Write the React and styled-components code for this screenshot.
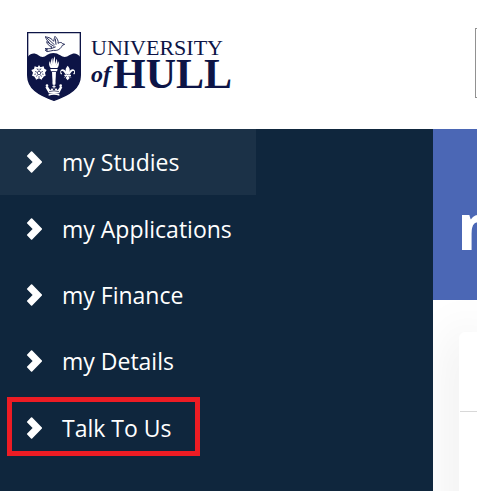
import styled, { createGlobalStyle } from 'styled-components';

const GlobalStyle = createGlobalStyle`
  * {
    box-sizing: border-box;
  }
  body {
    margin: 0;
    background: #ffffff;
    font-family: 'Open Sans', 'Noto Sans', sans-serif;
    overflow: hidden;
  }
`;

const Page = styled.div`
  display: flex;
  flex-direction: column;
  min-height: 100vh;
`;

const Header = styled.header`
  display: flex;
  align-items: flex-start;
  justify-content: space-between;
  height: 129px;
  padding: 28px 0 0 27px;
  overflow: hidden;
`;

const Logo = styled.a`
  display: flex;
  gap: 10px;
  padding-top: 4px;
  color: #0d1446;
  text-decoration: none;
  font-family: 'Liberation Serif', serif;
`;

const Wordmark = styled.span`
  display: flex;
  flex-direction: column;
  padding-top: 6px;
`;

const University = styled.span`
  font-size: 22px;
  line-height: 20px;
`;

const Hull = styled.span`
  display: flex;
  align-items: center;
  gap: 2px;
  font-size: 42px;
  font-weight: 700;
  line-height: 32px;
`;

const Of = styled.i`
  font-size: 24px;
`;

const Search = styled.input`
  flex: none;
  width: 240px;
  height: 70px;
  margin-right: -238px;
  border: 1px solid #919191;
  background: #ffffff;
`;

const Body = styled.div`
  display: flex;
  flex: 1;
`;

const Sidebar = styled.nav`
  flex: none;
  width: 433px;
  background: #0f263d;
`;

const Menu = styled.ul`
  display: grid;
  grid-template-rows: repeat(5, 1fr);
  width: 256px;
  height: 332px;
  margin: 0;
  padding: 0;
  list-style: none;
`;

const MenuItem = styled.li`
  position: relative;
  display: flex;
  background: ${(props) => (props.$active ? '#1b3147' : 'transparent')};
`;

const MenuLink = styled.a`
  display: flex;
  align-items: center;
  gap: 20px;
  width: 100%;
  padding-left: 26px;
  color: #ffffff;
  font-size: 23px;
  line-height: 32px;
  text-decoration: none;
`;

const Marker = styled.span`
  position: absolute;
  top: 2px;
  left: 7px;
  width: 193px;
  height: 59px;
  border: 5px solid #ed1c24;
  pointer-events: none;
`;

const Main = styled.main`
  display: flex;
  flex-direction: column;
  flex: 1;
  min-width: 0;
  overflow: hidden;
`;

const Banner = styled.div`
  display: flex;
  align-items: center;
  height: 171px;
  padding: 22px 0 0 24px;
  background: #4b67b5;
`;

const Title = styled.h1`
  margin: 0;
  color: #ffffff;
  font-size: 64px;
  font-weight: 700;
  line-height: 72px;
`;

const Content = styled.div`
  display: flex;
  flex: 1;
  padding: 32px 0 0 26px;
  overflow: hidden;
`;

const Card = styled.section`
  flex: 1;
  margin-bottom: -80px;
  border-radius: 6px 0 0 0;
  background: #ffffff;
  box-shadow: 0 0 50px rgba(0, 0, 0, 0.14);
`;

const CardHead = styled.div`
  height: 80px;
  margin-left: 1px;
  border-bottom: 1px solid #d8d8d8;
`;

const items = [
  { name: 'my Studies', active: true },
  { name: 'my Applications' },
  { name: 'my Finance' },
  { name: 'my Details' },
  { name: 'Talk To Us', marked: true },
];

const Chevron = () => (
  <svg width='16' height='22' viewBox='0 0 16 22' fill='#ffffff' aria-hidden='true'>
    <path d='M5 .6Q5.6 0 6.2 .6L15.9 10.4Q16.4 11 15.9 11.6L6.2 21.4Q5.6 22 5 21.4L1.2 17.6Q.6 17 1.2 16.4L6.6 11L1.2 5.6Q.6 5 1.2 4.4Z' />
  </svg>
);

const Crest = () => (
  <svg width='54' height='69' viewBox='36 36 162 207' aria-hidden='true'>
    <path
      d='M38 38H196V165C196 205 165 224 117 241C69 224 38 205 38 165Z'
      fill='#ffffff'
      stroke='#0d1446'
      strokeWidth='4'
    />
    <path
      d='M38 111C48 98 60 99 69 105C79 113 87 113 96 105C108 96 124 97 136 106C146 113 154 112 164 105C176 97 187 99 196 111V165C196 205 165 224 117 241C69 224 38 205 38 165Z'
      fill='#0d1446'
    />
    {/* dove */}
    <g fill='none' stroke='#0d1446' strokeWidth='2.6' strokeLinecap='round' strokeLinejoin='round'>
      <path d='M92 51C101 51 110 55 116 64C118 59 117 54 120 49C127 56 131 63 129 70C134 66 141 67 143 71L149 73L142 76C137 87 128 93 116 91C109 91 103 95 96 95L91 91L98 90L90 86L101 86C106 86 108 84 111 81C102 78 95 71 95 65L103 68C97 63 93 57 92 51Z' />
      <path d='M97 55L118 74M101 69L117 79M121 57L123 73M108 86L121 81' />
    </g>
    {/* rose */}
    <g fill='#ffffff'>
      <path d='M72 135L76 142L86 139L88 146L95 150L90 158L92 167L84 170L80 179L72 175L63 179L60 170L51 167L54 158L49 150L57 147L59 139L68 142Z' />
      <circle cx='72' cy='147' r='7' />
      <circle cx='83' cy='155' r='7' />
      <circle cx='79' cy='168' r='7' />
      <circle cx='65' cy='168' r='7' />
      <circle cx='61' cy='155' r='7' />
    </g>
    <g fill='none' stroke='#0d1446' strokeWidth='2'>
      <circle cx='72' cy='159' r='5' />
      <path d='M72 153V146M78 157L84 154M76 164L80 170M68 164L64 170M66 157L60 154M66 145L68 150M78 145L76 150M86 163L81 162M58 163L63 162M72 174V168' />
    </g>
    {/* torch */}
    <g fill='#ffffff'>
      <path d='M107 144C101 137 101 129 105 123L109 137C106 125 109 117 112 113L114 132C114 121 116 114 120 109L120 132L125 116C128 123 127 130 124 137L130 124C134 132 131 140 127 144Z' />
      <path d='M106 147H128L126 154H108Z' />
      <path d='M111 156H123L121 194H113Z' />
    </g>
    {/* fleur-de-lis */}
    <g fill='#ffffff'>
      <path d='M158 137C165 145 166 151 161 163H155C150 151 151 145 158 137Z' />
      <path d='M153 164C148 158 145 151 140 153C137 154 138 159 141 160C141 165 136 164 136 158C134 149 143 144 149 150C154 154 155 159 156 164Z' />
      <path d='M163 164C168 158 171 151 176 153C179 154 178 159 175 160C175 165 180 164 180 158C182 149 173 144 167 150C162 154 161 159 160 164Z' />
      <path d='M148 164H168V168H148ZM156 168H160L164 174L158 181L152 174ZM151 168L146 175L154 169ZM165 168L170 175L162 169Z' />
    </g>
    {/* crown */}
    <g fill='#ffffff'>
      <circle cx='96' cy='197' r='4' />
      <circle cx='137' cy='197' r='4' />
      <circle cx='117' cy='189' r='4' />
      <path d='M91 202L99 200L106 211L111 204L117 212L123 204L128 211L135 200L142 202L133 219H101Z' />
      <path d='M101 221Q117 217 133 221V227Q117 222 101 227Z' />
    </g>
    <path d='M102 215Q117 210 132 215M117 196V207' fill='none' stroke='#0d1446' strokeWidth='2' />
    <path d='M112 200H122M117 193V206' stroke='#ffffff' strokeWidth='3' />
  </svg>
);

const App = () => {
  return (
    <Page>
      <GlobalStyle />
      <Header>
        <Logo href='#home'>
          <Crest />
          <Wordmark>
            <University>UNIVERSITY</University>
            <Hull>
              <Of>of</Of>HULL
            </Hull>
          </Wordmark>
        </Logo>
        <Search type='search' aria-label='Search' />
      </Header>
      <Body>
        <Sidebar>
          <Menu>
            {items.map((item) => (
              <MenuItem key={item.name} $active={item.active}>
                <MenuLink href='#menu'>
                  <Chevron />
                  {item.name}
                </MenuLink>
                {item.marked && <Marker />}
              </MenuItem>
            ))}
          </Menu>
        </Sidebar>
        <Main>
          <Banner>
            <Title>m</Title>
          </Banner>
          <Content>
            <Card>
              <CardHead />
            </Card>
          </Content>
        </Main>
      </Body>
    </Page>
  );
};

export default App;
